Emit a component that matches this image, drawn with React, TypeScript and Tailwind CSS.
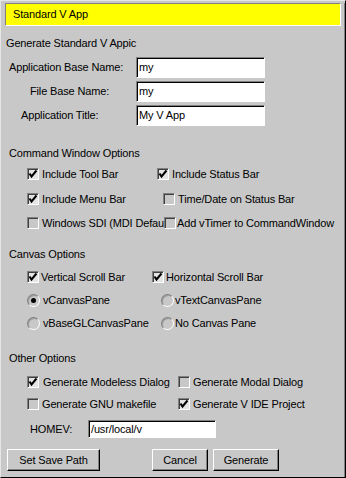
import React from "react";

function Check({ on }: { on?: boolean }) {
  return (
    <span
      className={`flex h-[12px] w-[12px] shrink-0 items-center justify-center border border-t-[#808080] border-l-[#808080] border-b-white border-r-white shadow-[inset_1px_1px_0_#404040] ${
        on ? "bg-[#e4e4e4]" : "bg-[#c8c8c8]"
      }`}
    >
      {on && (
        <svg width="10" height="10" viewBox="0 0 10 10">
          <polyline points="1.5,4.5 3.5,7.5 8.5,1.5" fill="none" stroke="#000" strokeWidth="2" />
        </svg>
      )}
    </span>
  );
}

function Radio({ on }: { on?: boolean }) {
  return (
    <span className="flex h-[13px] w-[13px] shrink-0 items-center justify-center rounded-full border border-t-[#808080] border-l-[#808080] border-b-white border-r-white bg-[#c8c8c8] shadow-[inset_1px_1px_0_#9a9a9a]">
      {on && <span className="h-[5px] w-[5px] rounded-full bg-black" />}
    </span>
  );
}

function Item({
  kind = "check",
  on,
  label,
  gap = "gap-[3px]",
}: {
  kind?: "check" | "radio";
  on?: boolean;
  label: string;
  gap?: string;
}) {
  return (
    <div className={`flex items-center whitespace-nowrap ${gap}`}>
      {kind === "check" ? <Check on={on} /> : <Radio on={on} />}
      <span>{label}</span>
    </div>
  );
}

function Field({ value, w }: { value: string; w: string }) {
  return (
    <div
      className={`flex h-full items-center border border-t-[#808080] border-l-[#808080] border-b-white border-r-white bg-white pl-[2px] shadow-[inset_1px_1px_0_#000] ${w}`}
    >
      {value}
    </div>
  );
}

function Button({ label, w }: { label: string; w: string }) {
  return (
    <div
      className={`flex h-[22px] items-center justify-center border border-t-white border-l-white border-b-black border-r-black shadow-[inset_-1px_-1px_0_#808080] ${w}`}
    >
      {label}
    </div>
  );
}

export default function App() {
  return (
    <div
      className="h-[478px] w-[346px] overflow-hidden border-t border-l border-b border-r border-t-[#e6e6e6] border-l-[#e6e6e6] border-b-black border-r-black bg-[#c8c8c8] text-[11px] leading-none tracking-[-0.15px] text-black"
      style={{ fontFamily: '"Liberation Sans", Arial, sans-serif' }}
    >
      <div className="h-full w-full border-r border-b border-r-[#808080] border-b-[#808080]">
        <div className="ml-[4px] mt-[2px] flex h-[23px] w-[336px] items-center border border-t-[#808080] border-l-[#808080] border-b-white border-r-white bg-[#ffff00] pl-[7px]">
          Standard V App
        </div>

        <div className="mt-[9px] flex h-[16px] items-center whitespace-nowrap pl-[5px]">
          Generate Standard V Appic
        </div>

        <div className="mt-[6px] flex h-[21px] items-center">
          <div className="w-[135px] pl-[8px]">Application Base Name:</div>
          <Field value="my" w="w-[129px]" />
        </div>
        <div className="mt-[3px] flex h-[21px] items-center">
          <div className="w-[135px] pl-[29px]">File Base Name:</div>
          <Field value="my" w="w-[129px]" />
        </div>
        <div className="mt-[3px] flex h-[21px] items-center">
          <div className="w-[135px] pl-[20px]">Application Title:</div>
          <Field value="My V App" w="w-[129px]" />
        </div>

        <div className="mt-[19px] flex h-[16px] items-center pl-[8px]">Command Window Options</div>
        <div className="mt-[5px] flex h-[16px] items-center pl-[26px]">
          <div className="w-[130px]">
            <Item on label="Include Tool Bar" />
          </div>
          <Item on label="Include Status Bar" />
        </div>
        <div className="mt-[9px] flex h-[16px] items-center pl-[26px]">
          <div className="w-[136px]">
            <Item on label="Include Menu Bar" />
          </div>
          <Item label="Time/Date on Status Bar" />
        </div>
        <div className="mt-[8px] flex h-[16px] items-center pl-[26px]">
          <div className="w-[137px]">
            <Item label="Windows SDI (MDI Defau" />
          </div>
          <Item label="Add vTimer to CommandWindow" gap="gap-[1px]" />
        </div>

        <div className="mt-[15px] flex h-[16px] items-center pl-[8px]">Canvas Options</div>
        <div className="mt-[7px] flex h-[16px] items-center pl-[26px]">
          <div className="w-[125px]">
            <Item on label="Vertical Scroll Bar" gap="gap-[2px]" />
          </div>
          <Item on label="Horizontal Scroll Bar" gap="gap-[2px]" />
        </div>
        <div className="mt-[7px] flex h-[16px] items-center pl-[26px]">
          <div className="w-[134px]">
            <Item kind="radio" on label="vCanvasPane" />
          </div>
          <Item kind="radio" label="vTextCanvasPane" gap="gap-[1px]" />
        </div>
        <div className="mt-[7px] flex h-[16px] items-center pl-[26px]">
          <div className="w-[134px]">
            <Item kind="radio" label="vBaseGLCanvasPane" />
          </div>
          <Item kind="radio" label="No Canvas Pane" gap="gap-[1px]" />
        </div>

        <div className="mt-[19px] flex h-[16px] items-center pl-[8px]">Other Options</div>
        <div className="mt-[8px] flex h-[16px] items-center pl-[26px]">
          <div className="w-[151px]">
            <Item on label="Generate Modeless Dialog" gap="gap-[4px]" />
          </div>
          <Item label="Generate Modal Dialog" />
        </div>
        <div className="mt-[6px] flex h-[16px] items-center pl-[26px]">
          <div className="w-[151px]">
            <Item label="Generate GNU makefile" />
          </div>
          <Item on label="Generate V IDE Project" />
        </div>
        <div className="mt-[8px] flex h-[18px] items-center">
          <div className="w-[87px] pl-[29px]">HOMEV:</div>
          <Field value="/usr/local/v" w="w-[128px]" />
        </div>

        <div className="mt-[11px] flex items-center pl-[6px]">
          <Button label="Set Save Path" w="w-[93px]" />
          <div className="ml-[52px]">
            <Button label="Cancel" w="w-[56px]" />
          </div>
          <div className="ml-[5px]">
            <Button label="Generate" w="w-[66px]" />
          </div>
        </div>
      </div>
    </div>
  );
}
